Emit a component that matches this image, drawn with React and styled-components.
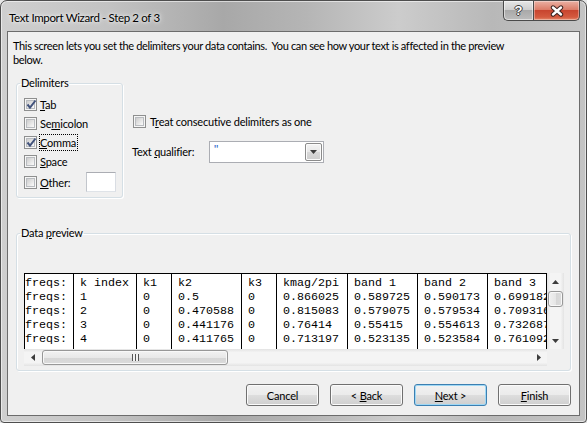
import React from "react";
import styled, { createGlobalStyle } from "styled-components";

const GlobalStyle = createGlobalStyle`
  html, body {
    margin: 0;
    padding: 0;
    background: #e6e6e6;
  }
  body {
    font-family: Lato, "Liberation Sans", sans-serif;
    font-size: 11px;
    letter-spacing: -0.2px;
    color: #000;
  }
  * {
    box-sizing: border-box;
  }
`;

const uiFont = `Lato, "Liberation Sans", sans-serif`;

const Window = styled.div`
  width: 587px;
  height: 423px;
  display: flex;
  flex-direction: column;
  padding: 0 6px 6px;
  border: 1px solid #4e4e4e;
  border-radius: 7px 7px 4px 4px;
  background: linear-gradient(
    90deg,
    #cfcfcf 0%,
    #c3c3c3 18%,
    #a8a8a8 38%,
    #b5b5b5 52%,
    #cccccc 68%,
    #b8b8b8 84%,
    #c4c4c4 100%
  );
  box-shadow: inset 0 0 0 1px rgba(255, 255, 255, 0.55);
`;

const TitleBar = styled.div`
  height: 30px;
  flex: none;
  display: flex;
  align-items: flex-start;
`;

const Title = styled.div`
  padding: 10px 0 0 2px;
  line-height: 14px;
  font-size: 11.5px;
  letter-spacing: -0.35px;
  text-shadow: 0 0 6px #fff, 0 0 3px rgba(255, 255, 255, 0.8);
`;

const CaptionButtons = styled.div`
  margin-left: auto;
  display: flex;
`;

const CaptionButton = styled.div`
  height: 20px;
  display: flex;
  align-items: center;
  justify-content: center;
  border: 1px solid #4a4a4a;
  border-top: none;
`;

const HelpButton = styled(CaptionButton)`
  width: 30px;
  border-right: none;
  border-radius: 0 0 0 5px;
  background: linear-gradient(#e6e6e6 0%, #cfcfcf 45%, #a9a9a9 50%, #bdbdbd 100%);
  box-shadow: inset 0 0 0 1px rgba(255, 255, 255, 0.5);
  color: #fff;
  font-family: "Liberation Sans", sans-serif;
  font-weight: bold;
  font-size: 13px;
  letter-spacing: 0;
  text-shadow: -1px 0 #3a3a3a, 1px 0 #3a3a3a, 0 -1px #3a3a3a, 0 1px #3a3a3a;
`;

const CloseButton = styled(CaptionButton)`
  width: 47px;
  border-radius: 0 0 5px 0;
  background: linear-gradient(#eab1a4 0%, #dc7d69 45%, #c8452f 50%, #d45a3f 85%, #e48a6c 100%);
  box-shadow: inset 0 0 0 1px rgba(255, 255, 255, 0.35);
`;

const Client = styled.div`
  flex: 1;
  display: flex;
  flex-direction: column;
  padding: 7px 8px 0;
  background: #f0f0f0;
  border: 1px solid #6c6c6c;
  font-family: ${uiFont};
  font-size: 11px;
  letter-spacing: -0.2px;
`;

const Intro = styled.p`
  margin: 0 0 0 -3px;
  width: 505px;
  line-height: 14px;
  letter-spacing: -0.35px;
`;

const MiddleRow = styled.div`
  margin-top: 9px;
  display: flex;
  align-items: flex-start;
`;

const Group = styled.fieldset`
  margin: 0;
  min-width: 0;
  border: 1px solid #d5dfe5;
  border-radius: 3px;
  box-shadow: inset 1px 1px 0 #fff, 1px 1px 0 #fff;
`;

const GroupTitle = styled.legend`
  margin-left: -4px;
  padding: 0 1px;
  line-height: 14px;
  font-size: 11px;
`;

const DelimiterGroup = styled(Group)`
  width: 107px;
  padding: 5px 6px 5px 7px;
`;

const CheckRow = styled.div`
  display: flex;
  align-items: center;
  height: ${(p) => (p.$tall ? 20 : 19)}px;
  margin-top: ${(p) => (p.$tall ? 1 : 0)}px;
`;

const Box = styled.span`
  position: relative;
  flex: none;
  width: 13px;
  height: 13px;
  padding: 1px;
  border: 1px solid #8e8f8f;
  background: #f6f6f6;
`;

const BoxFill = styled.span`
  display: block;
  width: 9px;
  height: 9px;
  border: 1px solid #b9bcc0;
  background: linear-gradient(135deg, #cdcdcd 0%, #e6e6e6 55%, #fbfbfb 100%);
`;

const CheckMark = styled.svg`
  position: absolute;
  left: 0;
  top: 0;
`;

const Label = styled.span`
  margin-left: 2px;
  padding: 0 1px 0 0;
  line-height: 15px;
  border: 1px dotted ${(p) => (p.$focused ? "#000" : "transparent")};
  white-space: nowrap;
`;

const Key = styled.span`
  text-decoration: underline;
  text-underline-offset: 1px;
`;

const SmallInput = styled.div`
  margin-left: auto;
  width: 30px;
  height: 20px;
  background: #fff;
  border: 1px solid #abadb3;
  border-left-color: #c2c6cc;
  border-bottom-color: #dfe3e8;
  border-right-color: #d9dde3;
`;

const Options = styled.div`
  margin-left: 9px;
  padding-top: 38px;
  display: flex;
  flex-direction: column;
`;

const TreatRow = styled.div`
  display: flex;
  align-items: center;
  height: 14px;
  margin-left: 1px;
  ${Label} {
    margin-left: 3px;
  }
`;

const QualifierRow = styled.div`
  margin-top: 13px;
  display: flex;
  align-items: center;
`;

const QualifierLabel = styled.span`
  width: 77px;
  line-height: 14px;
`;

const Combo = styled.div`
  width: 115px;
  height: 22px;
  display: flex;
  padding: 1px;
  background: #fff;
  border: 1px solid #abadb3;
`;

const ComboText = styled.span`
  flex: 1;
  padding: 1px 0 0 3px;
  line-height: 12px;
  color: #2b66c8;
  font-family: "Liberation Sans", sans-serif;
  font-size: 12px;
`;

const DropButton = styled.span`
  width: 17px;
  height: 18px;
  display: flex;
  align-items: center;
  justify-content: center;
  border: 1px solid #8b8b8b;
  border-radius: 2px;
  background: linear-gradient(#f4f4f4 0%, #e8e8e8 48%, #d8d8d8 52%, #cdcdcd 100%);
  box-shadow: inset 0 0 0 1px #fbfbfb;
`;

const PreviewGroup = styled(Group)`
  margin-top: 28px;
  width: 555px;
  padding: 33px 6px 4px 7px;
`;

const Preview = styled.div`
  display: grid;
  grid-template-columns: 523px 17px;
  grid-template-rows: 76px 17px;
`;

const Sheet = styled.div`
  display: flex;
  overflow: hidden;
  background: #fff;
  border: 1px solid #000;
  border-bottom: none;
  font-family: "Liberation Mono", "Courier New", monospace;
  font-size: 11.67px;
  letter-spacing: 0;
  line-height: 14px;
  white-space: pre;
`;

const Column = styled.div`
  flex: none;
  width: ${(p) => p.$width}px;
  padding: 2px 0 0 ${(p) => (p.$first ? 0 : 6)}px;
  border-left: ${(p) => (p.$first ? "none" : "1px solid #000")};
`;

const Track = styled.div`
  display: flex;
  flex-direction: ${(p) => (p.$vertical ? "column" : "row")};
  background: ${(p) =>
    p.$vertical
      ? "linear-gradient(90deg, #e3e3e3, #f4f4f4 20%, #f4f4f4 80%, #e3e3e3)"
      : "linear-gradient(#e3e3e3, #f4f4f4 20%, #f4f4f4 80%, #e3e3e3)"};
`;

const ArrowButton = styled.div`
  flex: none;
  width: 17px;
  height: 17px;
  display: flex;
  align-items: center;
  justify-content: center;
`;

const Thumb = styled.div`
  flex: none;
  display: flex;
  align-items: center;
  justify-content: center;
  border: 1px solid #979797;
  border-radius: 3px;
  box-shadow: inset 0 0 0 1px #f8f8f8;
  ${(p) =>
    p.$vertical
      ? `
    width: 15px;
    height: 16px;
    margin: 1px 0 0 1px;
    background: linear-gradient(90deg, #f0f0f0 0%, #e6e6e6 50%, #d6d6d6 51%, #dcdcdc 100%);
  `
      : `
    width: 186px;
    height: 15px;
    margin: 1px 0 0 1px;
    background: linear-gradient(#f2f2f2 0%, #e8e8e8 50%, #d6d6d6 51%, #dadada 100%);
  `}
`;

const Grip = styled.span`
  width: 7px;
  height: 7px;
  background: repeating-linear-gradient(
    90deg,
    #555 0,
    #555 1px,
    #f2f2f2 1px,
    #f2f2f2 3px
  );
`;

const Spacer = styled.div`
  flex: 1;
`;

const Corner = styled.div`
  background: #f0f0f0;
`;

const ButtonRow = styled.div`
  margin-top: 13px;
  display: flex;
  justify-content: flex-end;
  gap: 11px;
`;

const Button = styled.button`
  width: 73px;
  height: 22px;
  padding: 0;
  font-family: ${uiFont};
  font-size: 11px;
  letter-spacing: -0.2px;
  color: #000;
  border: 1px solid ${(p) => (p.$default ? "#3c7fb1" : "#707070")};
  border-radius: 3px;
  background: linear-gradient(#f2f2f2 0%, #ebebeb 48%, #dddddd 52%, #cfcfcf 100%);
  box-shadow: inset 0 0 0 1px ${(p) => (p.$default ? "#9fd8f5" : "#fbfbfb")};
`;

const Arrow = ({ dir }) => {
  const flat = dir === "up" || dir === "down";
  const paths = {
    left: "M4 0 L0 3.5 L4 7 Z",
    right: "M0 0 L4 3.5 L0 7 Z",
    up: "M0 4 L3.5 0 L7 4 Z",
    down: "M0 0 L7 0 L3.5 4 Z",
  };
  return (
    <svg width={flat ? 7 : 4} height={flat ? 4 : 7} viewBox={flat ? "0 0 7 4" : "0 0 4 7"}>
      <path d={paths[dir]} fill="#3c3c3c" />
    </svg>
  );
};

const CheckBox = ({ checked }) => (
  <Box>
    <BoxFill />
    {checked && (
      <CheckMark width="13" height="13" viewBox="0 0 13 13">
        <path
          d="M2.5 5.5 L5 8.6 L10.5 1.5"
          fill="none"
          stroke="#42537c"
          strokeWidth="2"
        />
      </CheckMark>
    )}
  </Box>
);

const delimiters = [
  { pre: "", key: "T", post: "ab", checked: true },
  { pre: "Se", key: "m", post: "icolon" },
  { pre: "", key: "C", post: "omma", checked: true, focused: true },
  { pre: "", key: "S", post: "pace" },
];

const columns = [
  { width: 48, cells: ["freqs:", "freqs:", "freqs:", "freqs:", "freqs:"] },
  { width: 63, cells: ["k index", "1", "2", "3", "4"] },
  { width: 35, cells: ["k1", "0", "0", "0", "0"] },
  { width: 70, cells: ["k2", "0.5", "0.470588", "0.441176", "0.411765"] },
  { width: 35, cells: ["k3", "0", "0", "0", "0"] },
  { width: 71, cells: ["kmag/2pi", "0.866025", "0.815083", "0.76414", "0.713197"] },
  { width: 70, cells: ["band 1", "0.589725", "0.579075", "0.55415", "0.523135"] },
  { width: 70, cells: ["band 2", "0.590173", "0.579534", "0.554613", "0.523584"] },
  { width: 80, cells: ["band 3", "0.699182", "0.709316", "0.732687", "0.761092"] },
];

export default function App() {
  return (
    <>
      <GlobalStyle />
      <Window>
        <TitleBar>
          <Title>Text Import Wizard - Step 2 of 3</Title>
          <CaptionButtons>
            <HelpButton>?</HelpButton>
            <CloseButton>
              <svg width="14" height="12" viewBox="0 0 14 12">
                <path
                  d="M3 2.5 L11 9.5 M11 2.5 L3 9.5"
                  stroke="#3b2320"
                  strokeWidth="4.4"
                  strokeLinecap="round"
                />
                <path
                  d="M3 2.5 L11 9.5 M11 2.5 L3 9.5"
                  stroke="#fff"
                  strokeWidth="2.4"
                  strokeLinecap="round"
                />
              </svg>
            </CloseButton>
          </CaptionButtons>
        </TitleBar>

        <Client>
          <Intro>
            This screen lets you set the delimiters your data contains.&nbsp; You can see
            how your text is affected in the preview below.
          </Intro>

          <MiddleRow>
            <DelimiterGroup>
              <GroupTitle>Delimiters</GroupTitle>
              {delimiters.map((d) => (
                <CheckRow key={d.pre + d.key + d.post}>
                  <CheckBox checked={d.checked} />
                  <Label $focused={d.focused}>
                    {d.pre}
                    <Key>{d.key}</Key>
                    {d.post}
                  </Label>
                </CheckRow>
              ))}
              <CheckRow $tall>
                <CheckBox />
                <Label>
                  <Key>O</Key>ther:
                </Label>
                <SmallInput />
              </CheckRow>
            </DelimiterGroup>

            <Options>
              <TreatRow>
                <CheckBox />
                <Label>
                  T<Key>r</Key>eat consecutive delimiters as one
                </Label>
              </TreatRow>
              <QualifierRow>
                <QualifierLabel>
                  Text <Key>q</Key>ualifier:
                </QualifierLabel>
                <Combo>
                  <ComboText>"</ComboText>
                  <DropButton>
                    <Arrow dir="down" />
                  </DropButton>
                </Combo>
              </QualifierRow>
            </Options>
          </MiddleRow>

          <PreviewGroup>
            <GroupTitle>
              Data <Key>p</Key>review
            </GroupTitle>
            <Preview>
              <Sheet>
                {columns.map((col, i) => (
                  <Column key={i} $width={col.width} $first={i === 0}>
                    {col.cells.join("\n")}
                  </Column>
                ))}
              </Sheet>
              <Track $vertical>
                <ArrowButton>
                  <Arrow dir="up" />
                </ArrowButton>
                <Thumb $vertical />
                <Spacer />
                <ArrowButton>
                  <Arrow dir="down" />
                </ArrowButton>
              </Track>
              <Track>
                <ArrowButton>
                  <Arrow dir="left" />
                </ArrowButton>
                <Thumb>
                  <Grip />
                </Thumb>
                <Spacer />
                <ArrowButton>
                  <Arrow dir="right" />
                </ArrowButton>
              </Track>
              <Corner />
            </Preview>
          </PreviewGroup>

          <ButtonRow>
            <Button>Cancel</Button>
            <Button>
              &lt; <Key>B</Key>ack
            </Button>
            <Button $default>
              <Key>N</Key>ext &gt;
            </Button>
            <Button>
              <Key>F</Key>inish
            </Button>
          </ButtonRow>
        </Client>
      </Window>
    </>
  );
}
